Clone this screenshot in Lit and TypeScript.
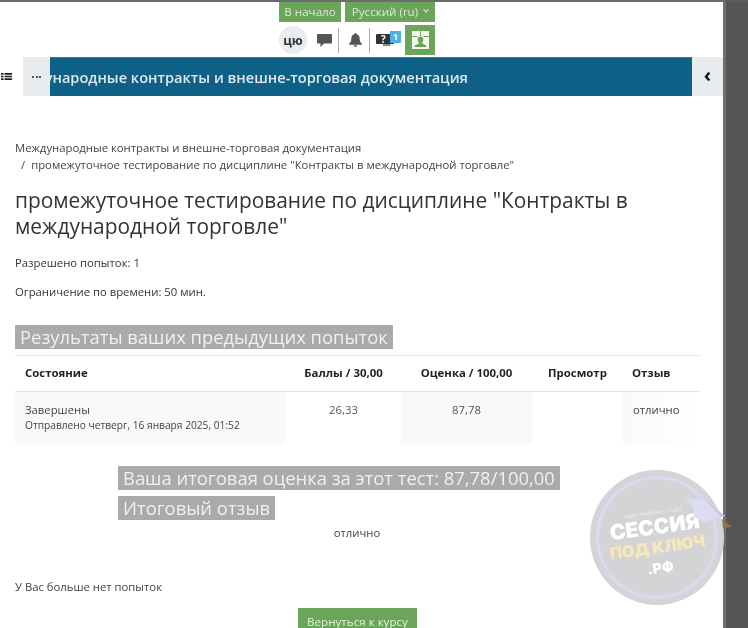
import { LitElement, html, css, svg } from "lit";
import { customElement } from "lit/decorators.js";

const listIcon = svg`<svg width="11" height="7" viewBox="0 0 11 7"><path fill="#1d2125" d="M0 0h2.500v1.700H0zM3.500 0H11v1.700H3.500zM0 2.650h2.500v1.700H0zM3.500 2.650H11v1.700H3.500zM0 5.300h2.500V7H0zM3.500 5.300H11V7H3.500z"/></svg>`;
const chatIcon = svg`<svg width="15" height="13" viewBox="0 0 15 13"><path fill="#555" d="M1 0h13a1 1 0 0 1 1 1v7.500a1 1 0 0 1-1 1H7L3.500 13V9.500H1a1 1 0 0 1-1-1V1a1 1 0 0 1 1-1z"/></svg>`;
const bellIcon = svg`<svg width="13" height="14" viewBox="0 0 14 15"><path fill="#555" d="M7 0a1.200 1.200 0 0 1 1.200 1.300C10.500 1.800 11.500 3.700 11.500 6c0 3 .7 4.200 2.500 5.800V12.500H0v-.7C1.800 10.200 2.500 9 2.500 6c0-2.300 1-4.200 3.300-4.700A1.200 1.200 0 0 1 7 0zM5.200 13.200h3.600a1.800 1.800 0 0 1-3.600 0z"/></svg>`;
const qaIcon = svg`<svg width="18" height="12" viewBox="0 0 18 12"><path fill="#333" d="M1 0h13v2h4v7a1 1 0 0 1-1 1H1a1 1 0 0 1-1-1V1a1 1 0 0 1 1-1z"/><path fill="#888" d="M7 10h7l1 2H7z"/></svg>`;
const seatIcon = svg`<svg width="17" height="18" viewBox="0 0 17 18"><rect width="17" height="18" fill="#f2f6ef"/><path fill="#6aa55a" d="M0 5h5.500v1H0zM11.500 5H17v1h-5.500zM8 0h1v5H8z"/><path fill="#6aa55a" d="M8.500 5.500c1.800 0 2.800 1.200 2.800 2.900 0 1.300-.6 2.300-1.200 2.900v1.200l4.200 2V16H2.700v-1.500l4.200-2v-1.200c-.6-.6-1.200-1.600-1.200-2.900 0-1.700 1-2.900 2.800-2.900z"/></svg>`;

@customElement("app-root")
export class AppRoot extends LitElement {
  static styles = css`
    :host {
      display: flex;
      position: relative;
      width: 748px;
      height: 628px;
      overflow: hidden;
      background: #fff;
      color: #333;
      font-family: "Open Sans", sans-serif;
      font-size: 11.300px;
    }
    .page {
      width: 723px;
      flex: none;
      box-sizing: border-box;
      border-top: 2px solid #6b6b6b;
      filter: blur(0.4px);
    }
    .gutter {
      flex: 1;
      background: #555;
      border-top: 2px solid #5c5c5c;
      border-left: 3px solid #6f6f6f;
    }
    .top {
      display: flex;
      justify-content: flex-end;
      gap: 4px;
      padding-right: 288px;
    }
    .top-btn {
      height: 20px;
      background: #6aa55a;
      color: #dfe9d8;
      display: flex;
      align-items: center;
      justify-content: center;
      font-size: 11.600px;
      padding-bottom: 2px;
      box-sizing: border-box;
      gap: 5px;
    }
    .home { width: 62px; }
    .lang { width: 90px; }
    .caret {
      width: 3px;
      height: 3px;
      margin-left: 1px;
      border-right: 1.500px solid #e8efe3;
      border-bottom: 1.500px solid #e8efe3;
      transform: rotate(45deg) translate(-1px, -1px);
    }
    .icons {
      display: flex;
      justify-content: flex-end;
      align-items: center;
      padding: 3px 288px 0 0;
      height: 30px;
    }
    .avatar {
      width: 28px;
      height: 28px;
      border-radius: 50%;
      background: #e9ecef;
      color: #333;
      font-size: 12.500px;
      font-weight: 700;
      display: flex;
      align-items: center;
      justify-content: center;
      margin-right: 10px;
    }
    .sep {
      width: 1px;
      height: 25px;
      background: #a9a9a9;
      margin: 0 10px 0 6px;
    }
    .sep.second { margin: 0 6px 0 7px; }
    .qa {
      position: relative;
      width: 18px;
      height: 12px;
      margin: 0 11px 0 0;
    }
    .qa svg { display: block; }
    .qa span {
      position: absolute;
      color: #fff;
      font-weight: 700;
    }
    .qa .mark {
      left: 5px;
      top: -2px;
      font-size: 10px;
    }
    .qa .badge {
      left: 14px;
      top: -3px;
      width: 11px;
      height: 12px;
      background: #4db2e3;
      font-size: 9px;
      line-height: 12px;
      text-align: center;
    }
    .seat {
      width: 30px;
      height: 30px;
      background: #6aa55a;
      display: flex;
      align-items: center;
      justify-content: center;
    }
    .bar {
      display: flex;
      height: 39px;
      margin-top: 2px;
    }
    .bar-side {
      display: flex;
      align-items: center;
      justify-content: center;
    }
    .list { width: 23px; justify-content: flex-start; padding-left: 1px; box-sizing: border-box; background: #fff; }
    .more { width: 27px; background: #e9ecef; gap: 1.500px; }
    .more i { width: 2px; height: 2px; border-radius: 50%; background: #1d2125; }
    .back { width: 31px; background: #e9ecef; font-weight: 700; font-size: 20px; color: #111; padding-bottom: 4px; box-sizing: border-box; }
    .course {
      flex: 1;
      min-width: 0;
      background: #0f6087;
      border-top: 1px solid #2f7da3;
      color: #dfe8ee;
      font-size: 14.600px;
      font-weight: 600;
      white-space: nowrap;
      overflow: hidden;
      display: flex;
      align-items: center;
    }
    .course span { margin-left: -48px; }
    .content {
      padding: 43px 24px 0 15px;
    }
    .crumbs {
      font-size: 11.340px;
      line-height: 17px;
      color: #444;
    }
    .crumbs div:last-child { padding-left: 6px; }
    .crumbs i { font-style: normal; margin-right: 6px; }
    h1 {
      margin: 14px 0 0;
      font-size: 20.900px;
      font-weight: 400;
      line-height: 26px;
      color: #333;
    }
    .info { margin: 17px 0 0; line-height: 14px; }
    .info + .info { margin-top: 15px; }
    .hl {
      display: block;
      width: fit-content;
      background: #aaa;
      color: #f0f0f0;
      font-size: 18.400px;
      line-height: 24px;
      padding: 0 5px;
    }
    .results { margin-top: 26px; }
    table {
      width: 684px;
      margin-top: 6px;
      border-collapse: collapse;
      table-layout: fixed;
      border-top: 1px solid #dee2e6;
    }
    th {
      height: 36px;
      padding: 0 0 3px;
      box-sizing: border-box;
      font-size: 11.400px;
      font-weight: 700;
      color: #1d2125;
      text-align: center;
      border-bottom: 1px solid #dee2e6;
    }
    th:first-child, td:first-child { text-align: left; padding-left: 10px; }
    th:last-child { text-align: left; padding-left: 9px; }
    td {
      height: 52px;
      padding: 10px 0 0;
      box-sizing: border-box;
      vertical-align: top;
      text-align: center;
      line-height: 15px;
      font-size: 11.300px;
      color: #555;
    }
    td.grey { background: #f9f9f9; }
    td.fade { background: linear-gradient(90deg, #f9f9f9, #fff); text-align: left; padding-left: 10px; color: #444; }
    .state { color: #444; }
    .sent { color: #444; font-size: 10.200px; line-height: 16px; }
    .summary { padding: 22px 0 0 103px; }
    .summary .hl + .hl { margin-top: 6px; }
    .feedback {
      text-align: center;
      margin: 6px 0 0 0;
      width: 684px;
      line-height: 14px;
      color: #444;
    }
    .none { margin-top: 40px; line-height: 14px; color: #444; }
    .back-course {
      display: block;
      width: 119px;
      height: 32px;
      margin: 14px 0 0 283px;
      background: #6aa55a;
      color: #e6efdf;
      font-size: 11.600px;
      text-align: center;
      line-height: 28px;
    }
    .stamp {
      position: absolute;
      left: 590px;
      top: 470px;
      width: 134px;
      height: 135px;
      border-radius: 50%;
      background: #d4d4d6;
      box-sizing: border-box;
      filter: blur(0.4px);
    }
    .ring {
      position: absolute;
      inset: 6px;
      border-radius: 50%;
      border: 3px solid #d9daf0;
    }
    .stamp-text {
      position: absolute;
      left: 0;
      right: 0;
      top: 38px;
      text-align: center;
      transform: rotate(-8deg);
      font-family: "Inter", "Open Sans", sans-serif;
      color: #fff;
      font-weight: 900;
    }
    .stamp-text div { white-space: nowrap; }
    .t0 { font-size: 5px; font-weight: 400; color: #eee; line-height: 8px; }
    .t1 { font-size: 21px; line-height: 22px; }
    .t2 { font-size: 16.200px; line-height: 19px; color: #f8e8b8; }
    .t3 { font-size: 14px; line-height: 22px; }
    .cap { position: absolute; left: 685px; top: 495px; }
  `;

  protected render() {
    return html`
      <div class="page">
        <div class="top">
          <div class="top-btn home">В начало</div>
          <div class="top-btn lang">Русский (ru) <span class="caret"></span></div>
        </div>
        <div class="icons">
          <div class="avatar">цю</div>
          ${chatIcon}
          <div class="sep"></div>
          ${bellIcon}
          <div class="sep second"></div>
          <div class="qa">
            ${qaIcon}
            <span class="mark">?</span>
            <span class="badge">1</span>
          </div>
          <div class="seat">${seatIcon}</div>
        </div>
        <div class="bar">
          <div class="bar-side list">${listIcon}</div>
          <div class="bar-side more"><i></i><i></i><i></i></div>
          <div class="course"><span>Международные контракты и внешне-торговая документация</span></div>
          <div class="bar-side back">‹</div>
        </div>
        <div class="content">
          <div class="crumbs">
            <div>Международные контракты и внешне-торговая документация</div>
            <div><i>/</i>промежуточное тестирование по дисциплине "Контракты в международной торговле"</div>
          </div>
          <h1>промежуточное тестирование по дисциплине "Контракты в международной торговле"</h1>
          <p class="info">Разрешено попыток: 1</p>
          <p class="info">Ограничение по времени: 50 мин.</p>
          <div class="hl results">Результаты ваших предыдущих попыток</div>
          <table>
            <colgroup>
              <col style="width:271px" />
              <col style="width:115px" />
              <col style="width:131px" />
              <col style="width:91px" />
              <col style="width:76px" />
            </colgroup>
            <tr>
              <th>Состояние</th>
              <th>Баллы / 30,00</th>
              <th>Оценка / 100,00</th>
              <th>Просмотр</th>
              <th>Отзыв</th>
            </tr>
            <tr>
              <td class="grey">
                <div class="state">Завершены</div>
                <div class="sent">Отправлено четверг, 16 января 2025, 01:52</div>
              </td>
              <td>26,33</td>
              <td class="grey">87,78</td>
              <td></td>
              <td class="fade">отлично</td>
            </tr>
          </table>
          <div class="summary">
            <div class="hl">Ваша итоговая оценка за этот тест: 87,78/100,00</div>
            <div class="hl">Итоговый отзыв</div>
          </div>
          <div class="feedback">отлично</div>
          <div class="none">У Вас больше нет попыток</div>
          <div class="back-course">Вернуться к курсу</div>
        </div>
      </div>
      <div class="gutter"></div>
      <div class="stamp">
        <div class="ring"></div>
        <div class="stamp-text">
          <div class="t0">здесь помогают с СДО</div>
          <div class="t1">СЕССИЯ</div>
          <div class="t2">ПОД КЛЮЧ</div>
          <div class="t3">.РФ</div>
        </div>
      </div>
      <svg class="cap" width="50" height="38" viewBox="0 0 50 38">
        <path fill="#dcdcf2" d="M0 3l20 2 20 16-22 6-9-5-1-10z"/>
        <path fill="#c5c6e8" d="M20 5l20 16-4 1z"/>
        <path fill="#8f7448" d="M37 24l10 8-9 1z"/>
      </svg>
    `;
  }
}
